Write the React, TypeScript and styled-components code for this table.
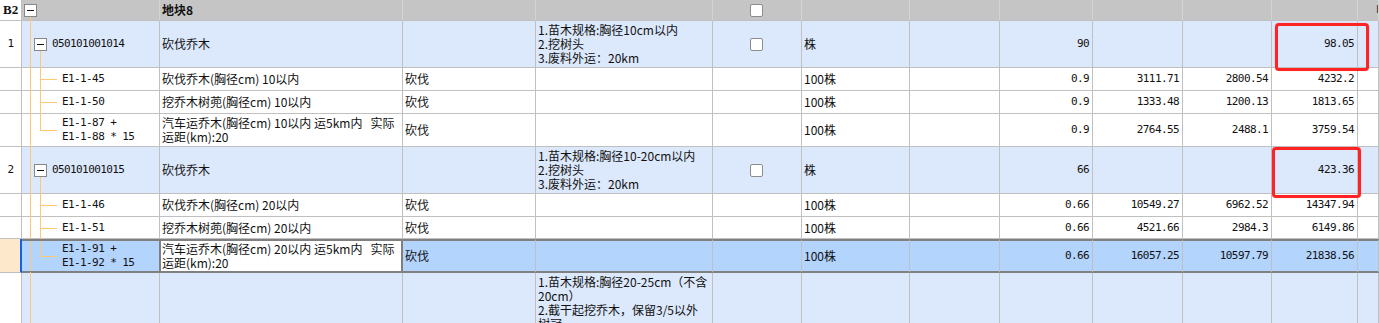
import React from 'react';
import styled, { createGlobalStyle, css } from 'styled-components';

const GlobalStyle = createGlobalStyle`
  html, body { margin: 0; padding: 0; background: #fff; overflow: hidden; }
  #root { width: 1379px; }
`;

const C = {
  grid: '#c0c0c0',
  headBg: '#c5c5c5',
  headLine: '#d4d4d4',
  itemBg: '#dce8fb',
  selBg: '#b3d4fd',
  peach: '#fde8cb',
  tree: '#ffc673',
  dark: '#808080',
  blue: '#0f62ea',
  red: '#ff2323',
  text: '#111',
};

type Kind = 'header' | 'item' | 'child' | 'selected' | 'tail';

const COLS = '22px 138px 243px 133px 177px 89px 108px 90px 93px 90px 89px 86px 1fr';

const bgFor = (kind: Kind) =>
  ({ header: C.headBg, item: C.itemBg, child: '#fff', selected: C.selBg, tail: C.itemBg }[kind]);

const monoFont = css`
  font-family: 'DejaVu Sans Mono', 'Liberation Mono', monospace;
  font-size: 11px;
  letter-spacing: -0.6px;
`;

const Sheet = styled.div`
  position: relative;
  width: 1379px;
  font-family: 'Noto Sans CJK SC', 'Noto Sans', sans-serif;
  font-size: 12px;
  line-height: 14px;
  color: ${C.text};
`;

const Row = styled.div<{ $h: number }>`
  display: grid;
  grid-template-columns: ${COLS};
  height: ${p => p.$h}px;
`;

const cellBase = css<{ $kind: Kind }>`
  box-sizing: border-box;
  position: relative;
  min-width: 0;
  display: flex;
  align-items: center;
  border-right: 1px solid ${p => (p.$kind === 'header' ? C.headLine : C.grid)};
  border-bottom: 1px solid ${C.grid};
  background: ${p => bgFor(p.$kind)};
  white-space: pre;
  ${p =>
    p.$kind === 'selected' &&
    css`
      border-top: 2px solid ${C.dark};
      border-bottom: 2px solid ${C.dark};
    `}
`;

type Align = 'left' | 'right' | 'center';

const Cell = styled.div<{
  $kind: Kind;
  $align?: Align;
  $mono?: boolean;
  $top?: boolean;
  $edit?: boolean;
  $bold?: boolean;
}>`
  ${cellBase}
  overflow: hidden;
  justify-content: ${p => (p.$align === 'right' ? 'flex-end' : p.$align === 'center' ? 'center' : 'flex-start')};
  align-items: ${p => (p.$top ? 'flex-start' : 'center')};
  padding: ${p => (p.$top ? '2px' : '0')} 3px 0 2px;
  font-weight: ${p => (p.$bold ? 700 : 400)};
  ${p => p.$mono && monoFont}
  ${p =>
    p.$edit &&
    css`
      background: #fff;
      border-left: 1px solid ${C.dark};
      border-right: 2px solid ${C.dark};
      padding-left: 1px;
    `}
`;

const IndexCell = styled.div<{ $kind: Kind }>`
  box-sizing: border-box;
  display: flex;
  align-items: center;
  justify-content: ${p => (p.$kind === 'header' ? 'flex-start' : 'center')};
  padding-left: ${p => (p.$kind === 'header' ? '3px' : '0')};
  border-right: 1px solid ${C.grid};
  border-bottom: 1px solid ${C.grid};
  background: #fff;
  ${monoFont}
  ${p =>
    p.$kind === 'header' &&
    css`
      font-family: 'Liberation Serif', 'DejaVu Serif', serif;
      font-size: 13px;
      font-weight: 700;
      letter-spacing: 0;
    `}
  ${p =>
    p.$kind === 'selected' &&
    css`
      background: ${C.peach};
      border-right: 2px solid ${C.blue};
    `}
`;

const TreeBox = styled.div<{ $kind: Kind; $level: number }>`
  ${cellBase}
  padding-left: ${p => (p.$level === 0 ? 2 : p.$level === 1 ? 12 : 40)}px;
  ${p =>
    p.$kind === 'selected' &&
    css`
      border-right-color: ${C.dark};
    `}
`;

const VLine = styled.span<{ $x: number; $from: string; $to: string }>`
  position: absolute;
  left: ${p => p.$x}px;
  top: ${p => p.$from};
  bottom: ${p => p.$to};
  width: 1px;
  background: ${C.tree};
`;

const HLine = styled.span`
  position: absolute;
  left: 18px;
  top: 50%;
  width: 17px;
  height: 1px;
  background: ${C.tree};
`;

const Toggle = styled.span<{ $gap: number }>`
  box-sizing: border-box;
  position: relative;
  flex: none;
  width: 13px;
  height: 13px;
  margin-right: ${p => p.$gap}px;
  border: 1px solid #878787;
  background: #fff;
  &::after {
    content: '';
    position: absolute;
    left: 2px;
    right: 2px;
    top: 5px;
    height: 1px;
    background: #111;
  }
`;

const Code = styled.span`
  ${monoFont}
  white-space: pre;
  line-height: 14px;
`;

const Check = styled.span`
  box-sizing: border-box;
  display: block;
  width: 13px;
  height: 13px;
  border: 1px solid #8c8c8c;
  border-radius: 2px;
  background: #fff;
`;

const Extra = styled.span`
  padding-left: 16px;
  font-family: 'DejaVu Sans', sans-serif;
  font-size: 11px;
  color: #333;
`;

const Mark = styled.div<{ $x: number; $y: number; $w: number; $h: number }>`
  position: absolute;
  left: ${p => p.$x}px;
  top: ${p => p.$y}px;
  width: ${p => p.$w}px;
  height: ${p => p.$h}px;
  box-sizing: border-box;
  border: 3px solid ${C.red};
  border-radius: 4px;
  box-shadow: 0 0 1px rgba(255, 0, 0, 0.4);
  pointer-events: none;
`;

interface TreeInfo {
  level: 0 | 1 | 2;
  code?: string;
  last?: boolean;
  toggle?: boolean;
}

interface Line {
  kind: Kind;
  h: number;
  idx?: string;
  tree: TreeInfo;
  name?: string;
  c3?: string;
  spec?: string;
  check?: boolean;
  unit?: string;
  qty?: string;
  p1?: string;
  p2?: string;
  total?: string;
  extra?: string;
}

const rows: Line[] = [
  { kind: 'header', h: 21, idx: 'B2', tree: { level: 0, toggle: true }, name: '地块8', check: true, extra: 'I' },
  {
    kind: 'item', h: 47, idx: '1', tree: { level: 1, toggle: true, code: '050101001014' },
    name: '砍伐乔木', spec: '1.苗木规格:胸径10cm以内\n2.挖树头\n3.废料外运：20km', check: true, unit: '株',
    qty: '90', total: '98.05',
  },
  {
    kind: 'child', h: 23, tree: { level: 2, code: 'E1-1-45' }, name: '砍伐乔木(胸径cm) 10以内', c3: '砍伐',
    unit: '100株', qty: '0.9', p1: '3111.71', p2: '2800.54', total: '4232.2',
  },
  {
    kind: 'child', h: 23, tree: { level: 2, code: 'E1-1-50' }, name: '挖乔木树蔸(胸径cm) 10以内', c3: '砍伐',
    unit: '100株', qty: '0.9', p1: '1333.48', p2: '1200.13', total: '1813.65',
  },
  {
    kind: 'child', h: 33, tree: { level: 2, code: 'E1-1-87 +\nE1-1-88 * 15', last: true },
    name: '汽车运乔木(胸径cm) 10以内 运5km内   实际\n运距(km):20', c3: '砍伐',
    unit: '100株', qty: '0.9', p1: '2764.55', p2: '2488.1', total: '3759.54',
  },
  {
    kind: 'item', h: 47, idx: '2', tree: { level: 1, toggle: true, code: '050101001015' },
    name: '砍伐乔木', spec: '1.苗木规格:胸径10-20cm以内\n2.挖树头\n3.废料外运：20km', check: true, unit: '株',
    qty: '66', total: '423.36',
  },
  {
    kind: 'child', h: 23, tree: { level: 2, code: 'E1-1-46' }, name: '砍伐乔木(胸径cm) 20以内', c3: '砍伐',
    unit: '100株', qty: '0.66', p1: '10549.27', p2: '6962.52', total: '14347.94',
  },
  {
    kind: 'child', h: 22, tree: { level: 2, code: 'E1-1-51' }, name: '挖乔木树蔸(胸径cm) 20以内', c3: '砍伐',
    unit: '100株', qty: '0.66', p1: '4521.66', p2: '2984.3', total: '6149.86',
  },
  {
    kind: 'selected', h: 34, tree: { level: 2, code: 'E1-1-91 +\nE1-1-92 * 15', last: true },
    name: '汽车运乔木(胸径cm) 20以内 运5km内   实际\n运距(km):20', c3: '砍伐',
    unit: '100株', qty: '0.66', p1: '16057.25', p2: '10597.79', total: '21838.56',
  },
  {
    kind: 'tail', h: 120, tree: { level: 1 },
    spec: '1.苗木规格:胸径20-25cm（不含\n20cm）\n2.截干起挖乔木，保留3/5以外\n树冠',
  },
];

function Tree({ row }: { row: Line }) {
  const k = row.kind;
  const t = row.tree;
  const edge = k === 'selected' ? '0' : '-1px';
  return (
    <TreeBox $kind={k} $level={t.level}>
      {t.level === 0 ? <VLine $x={8} $from="16px" $to="-1px" /> : <VLine $x={8} $from={edge} $to={edge} />}
      {t.level === 1 && t.toggle && <VLine $x={18} $from="calc(50% + 7px)" $to="-1px" />}
      {t.level === 2 && (
        <>
          <VLine $x={18} $from={edge} $to={t.last ? 'calc(50% - 1px)' : '-1px'} />
          <HLine />
        </>
      )}
      {t.toggle && <Toggle $gap={t.level === 1 ? 5 : 0} />}
      {t.code && <Code>{t.code}</Code>}
    </TreeBox>
  );
}

function SheetRow({ row }: { row: Line }) {
  const k = row.kind;
  return (
    <Row $h={row.h}>
      <IndexCell $kind={k}>{row.idx}</IndexCell>
      <Tree row={row} />
      <Cell $kind={k} $edit={k === 'selected'} $bold={k === 'header'}>{row.name}</Cell>
      <Cell $kind={k}>{row.c3}</Cell>
      <Cell $kind={k} $top={k === 'tail'}>{row.spec}</Cell>
      <Cell $kind={k} $align="center">{row.check && <Check />}</Cell>
      <Cell $kind={k}>{row.unit}</Cell>
      <Cell $kind={k} />
      <Cell $kind={k} $align="right" $mono>{row.qty}</Cell>
      <Cell $kind={k} $align="right" $mono>{row.p1}</Cell>
      <Cell $kind={k} $align="right" $mono>{row.p2}</Cell>
      <Cell $kind={k} $align="right" $mono>{row.total}</Cell>
      <Cell $kind={k}>{row.extra && <Extra>{row.extra}</Extra>}</Cell>
    </Row>
  );
}

export default function App() {
  return (
    <>
      <GlobalStyle />
      <Sheet>
        {rows.map((r, i) => (
          <SheetRow key={i} row={r} />
        ))}
        <Mark $x={1275} $y={23} $w={94} $h={48} />
        <Mark $x={1272} $y={147} $w={89} $h={51} />
      </Sheet>
    </>
  );
}
